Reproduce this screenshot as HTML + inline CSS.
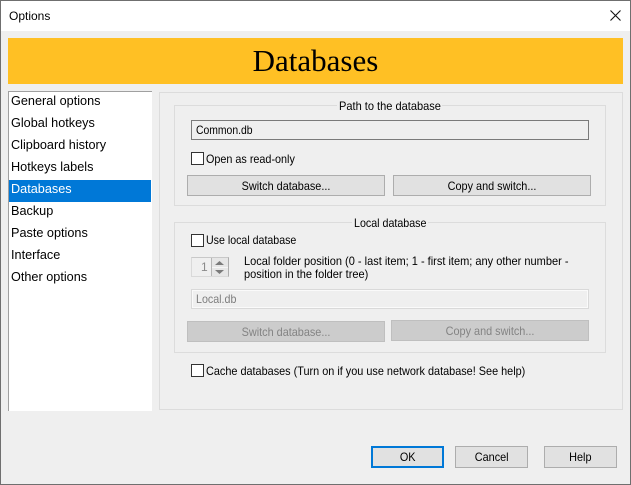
<!DOCTYPE html>
<html><head><meta charset="utf-8"><style>
html,body{margin:0;padding:0}
body{width:631px;height:485px;overflow:hidden;background:#efefef;position:relative;font-family:"Liberation Sans",sans-serif;font-size:12px;color:#000}
div{position:absolute;box-sizing:border-box;white-space:nowrap}
.t{line-height:16px;height:16px;transform-origin:0 50%}
.li{left:0;width:142px;height:22px;line-height:17px;padding-left:2px;font-size:13px;color:#000}
.li span{display:inline-block;transform:scaleX(.975);transform-origin:0 50%}
.grp{border:1px solid #dcdcdc}
.cb{width:13px;height:13px;border:1px solid #333;background:#fff;left:191px}
.btn{background:#e1e1e1;border:1px solid #adadad;text-align:center;line-height:20px}
.dis{background:#ccc;border:1px solid #bfbfbf;color:#838383;text-align:center;line-height:20px}
.btn span,.dis span{display:inline-block;transform:scaleX(.905)}
.gap{background:#efefef;height:3px}
</style></head><body>
<div style="left:0;top:0;width:631px;height:485px;border:1px solid #6f6f6f;z-index:5"></div>
<div style="left:1px;top:1px;width:629px;height:30px;background:#fff"></div>
<div class="t" style="left:9px;top:8px;font-size:12px">Options</div>
<svg style="position:absolute;left:610px;top:10px" width="11" height="11" viewBox="0 0 11 11"><path d="M.5.5l10 10M10.500.5l-10 10" stroke="#111" stroke-width="1.1" fill="none"/></svg>
<div style="left:8px;top:38px;width:615px;height:46px;background:#ffc024;text-align:center;font-family:'Liberation Serif',serif;font-size:31px;line-height:45px">Databases</div>

<div style="left:8px;top:91px;width:144px;height:320px;background:#fff;border-left:1px solid #a0a0a0;border-top:1px solid #a0a0a0">
<div class="li" style="top:0"><span>General options</span></div>
<div class="li" style="top:22px"><span>Global hotkeys</span></div>
<div class="li" style="top:44px"><span>Clipboard history</span></div>
<div class="li" style="top:66px"><span>Hotkeys labels</span></div>
<div class="li" style="top:88px;background:#0078d7;color:#fff"><span>Databases</span></div>
<div class="li" style="top:110px"><span>Backup</span></div>
<div class="li" style="top:132px"><span>Paste options</span></div>
<div class="li" style="top:154px"><span>Interface</span></div>
<div class="li" style="top:176px"><span>Other options</span></div>
</div>

<div class="grp" style="left:159px;top:92px;width:464px;height:318px"></div>

<div class="grp" style="left:174px;top:105px;width:432px;height:101px"></div>
<div class="gap" style="left:337px;top:104px;width:105px"></div>
<div class="t" style="left:339px;top:98px;transform:scaleX(.92)">Path to the database</div>
<div style="left:191px;top:120px;width:398px;height:20px;border:1px solid #7a7a7a;background:#efefef"></div>
<div class="t" style="left:196px;top:122px;transform:scaleX(.865)">Common.db</div>
<div class="cb" style="top:152px"></div>
<div class="t" style="left:206px;top:151px;transform:scaleX(.9)">Open as read-only</div>
<div class="btn" style="left:187px;top:175px;width:198px;height:21px"><span>Switch database...</span></div>
<div class="btn" style="left:393px;top:175px;width:198px;height:21px"><span>Copy and switch...</span></div>

<div class="grp" style="left:174px;top:222px;width:432px;height:131px"></div>
<div class="gap" style="left:352px;top:221px;width:76px"></div>
<div class="t" style="left:354px;top:215px;transform:scaleX(.89)">Local database</div>
<div class="cb" style="top:234px"></div>
<div class="t" style="left:206px;top:232px;transform:scaleX(.885)">Use local database</div>
<div style="left:191px;top:257px;width:38px;height:20px;border:1px solid #d9d9d9;border-right-color:#adadad;border-top-color:#c8c8c8;background:#efefef;color:#8a8a8a;padding-left:9px;line-height:19px">1</div>
<div style="left:211px;top:258px;width:17px;height:18px;border-left:1px solid #b5b5b5;background:#e6e6e6"></div>
<div style="left:212px;top:267px;width:16px;height:1px;background:#f5f5f5"></div>
<svg style="position:absolute;left:215px;top:261px" width="9" height="14" viewBox="0 0 9 14"><path d="M4.500 0L9 4H0zM0 9h9L4.500 13z" fill="#7a7a7a"/></svg>
<div style="left:244px;top:255px;line-height:13px;white-space:pre;transform:scaleX(.918);transform-origin:0 50%">Local folder position (0 - last item; 1 - first item; any other number -
position in the folder tree)</div>
<div style="left:191px;top:289px;width:398px;height:20px;border:1px solid #d9d9d9;background:#efefef;box-shadow:inset 0 0 0 1px #fafafa"></div>
<div class="t" style="left:196px;top:291px;color:#7d7d7d;transform:scaleX(.89)">Local.db</div>
<div class="dis" style="left:187px;top:321px;width:198px;height:21px"><span>Switch database...</span></div>
<div class="dis" style="left:391px;top:320px;width:198px;height:21px"><span>Copy and switch...</span></div>

<div class="cb" style="top:364px"></div>
<div class="t" style="left:206px;top:363px;transform:scaleX(.906)">Cache databases (Turn on if you use network database! See help)</div>

<div class="btn" style="left:371px;top:446px;width:73px;height:22px;border:2px solid #0078d7;line-height:19px"><span>OK</span></div>
<div class="btn" style="left:455px;top:446px;width:73px;height:22px;"><span>Cancel</span></div>
<div class="btn" style="left:544px;top:446px;width:73px;height:22px;"><span>Help</span></div>
</body></html>
